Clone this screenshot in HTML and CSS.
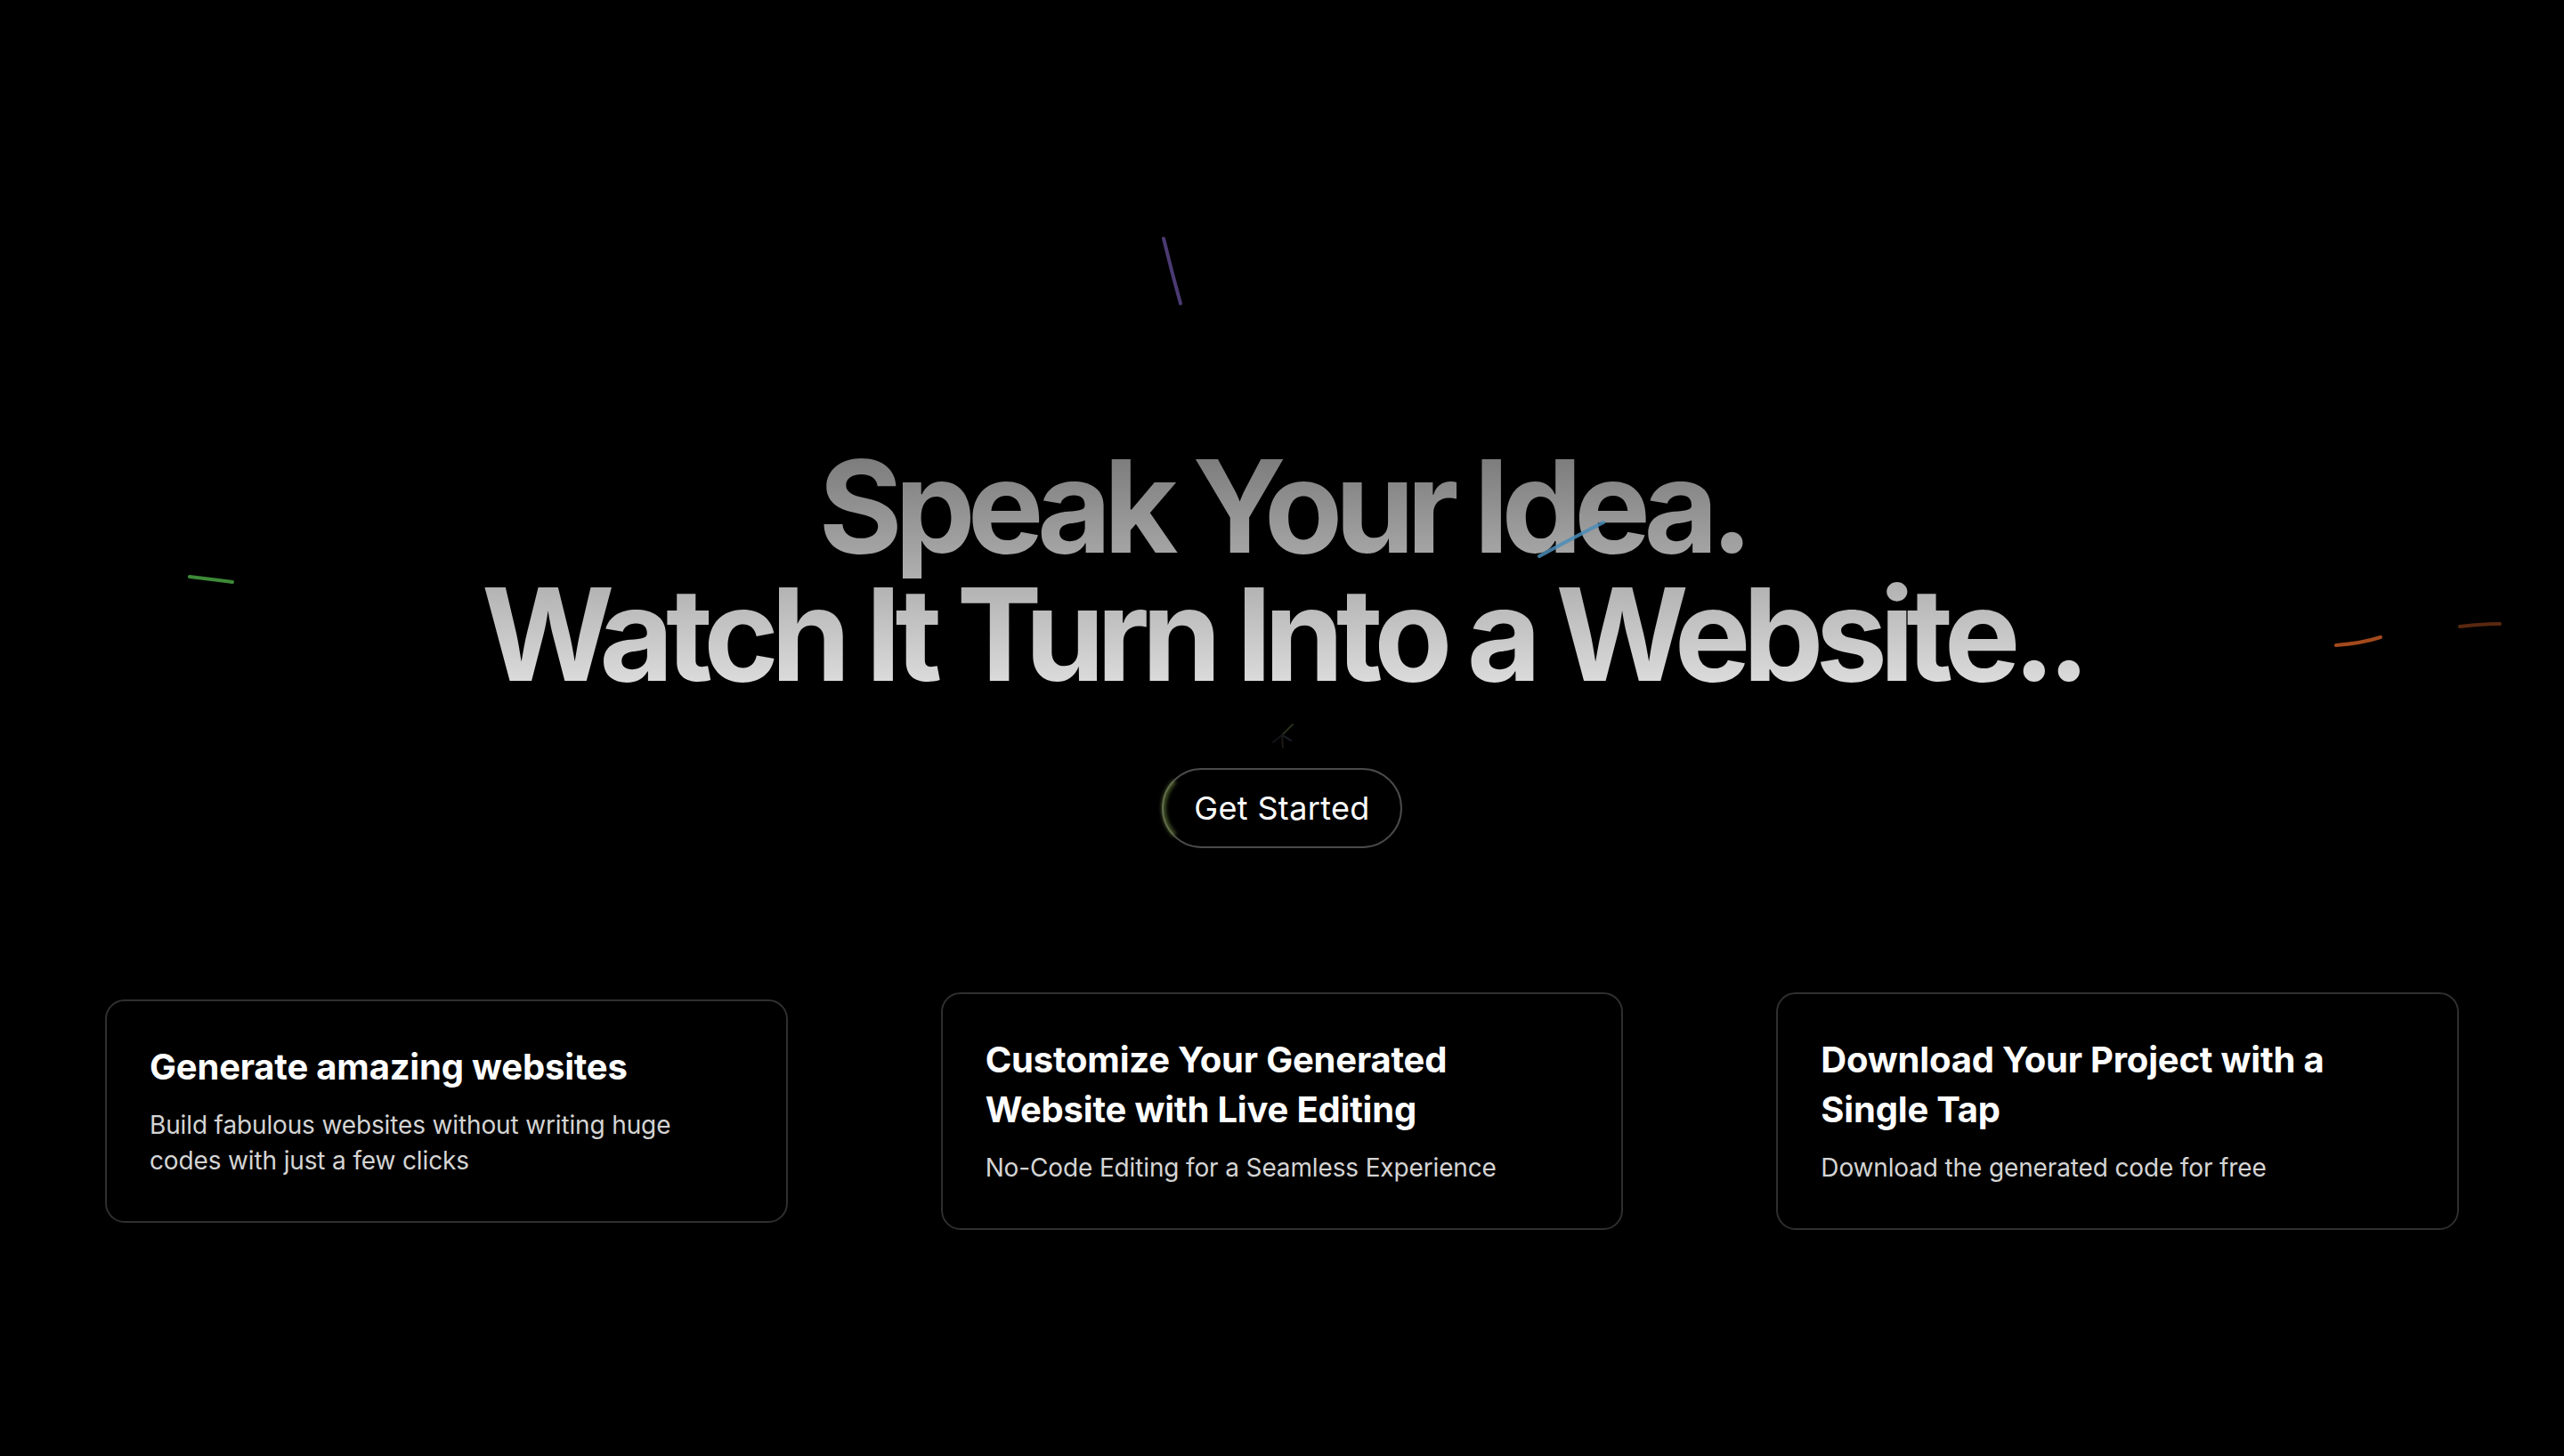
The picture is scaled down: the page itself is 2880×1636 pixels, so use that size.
FILE: index.html
```html
<!DOCTYPE html>
<html lang="en">
<head>
<meta charset="utf-8">
<title>Speak Your Idea</title>
<link rel="stylesheet" href="styles.css">
</head>
<body>
<div class="page">
  <svg class="streaks" width="2880" height="1636" viewBox="0 0 2880 1636" aria-hidden="true">
    <path d="M1307 268 Q1316 305 1326 341" stroke="#4b3a72" stroke-width="4" stroke-linecap="round" fill="none"/>
    <path d="M213 648 Q238 651 261 654" stroke="#3d8a38" stroke-width="4" stroke-linecap="round" fill="none"/>
    <path d="M2624 725 Q2652 723 2674 716" stroke="#a34a1c" stroke-width="4" stroke-linecap="round" fill="none"/>
    <path d="M2763 704 Q2786 701 2808 701" stroke="#5a2810" stroke-width="4" stroke-linecap="round" fill="none"/>
    <path d="M1729 625 Q1765 605 1801 587" stroke="#4a8cb8" stroke-opacity="0.85" stroke-width="4" stroke-linecap="round" fill="none"/>
    <g stroke-width="2" stroke-linecap="round" opacity="0.45">
      <path d="M1440 826 L1452 814" stroke="#556a40"/>
      <path d="M1440 826 L1450 832" stroke="#3e4a5a"/>
      <path d="M1440 826 L1441 840" stroke="#3b3b2a"/>
      <path d="M1440 826 L1430 834" stroke="#2e2e3a"/>
    </g>
  </svg>

  <main class="hero">
    <h1 class="headline">Speak Your Idea.<br>Watch It Turn Into a Website..</h1>
    <button class="cta" type="button">Get Started</button>

    <section class="features">
      <article class="card">
        <h2 class="card-title">Generate amazing websites</h2>
        <p class="card-text">Build fabulous websites without writing huge codes with just a few clicks</p>
      </article>
      <article class="card">
        <h2 class="card-title">Customize Your Generated Website with Live Editing</h2>
        <p class="card-text">No-Code Editing for a Seamless Experience</p>
      </article>
      <article class="card">
        <h2 class="card-title">Download Your Project with a Single Tap</h2>
        <p class="card-text">Download the generated code for free</p>
      </article>
    </section>
  </main>
</div>
</body>
</html>
```

FILE: styles.css
```css
* { box-sizing: border-box; }

html, body {
  margin: 0;
  padding: 0;
  background: #000;
}

body {
  font-family: Inter, "Noto Sans", "Liberation Sans", sans-serif;
  color: #fff;
}

.page {
  position: relative;
  min-height: 1636px;
  overflow: hidden;
}

.streaks {
  position: absolute;
  top: 0;
  left: 0;
  pointer-events: none;
  z-index: 2;
}

.hero {
  display: flex;
  flex-direction: column;
  align-items: center;
  padding-top: 497px;
}

.headline {
  margin: 0;
  font-size: 144px;
  line-height: 1;
  font-weight: 700;
  letter-spacing: -0.062em;
  text-align: center;
  background: linear-gradient(180deg, #767676 0%, #e2e2e2 100%);
  -webkit-background-clip: text;
  background-clip: text;
  color: transparent;
}

.cta {
  position: relative;
  margin-top: 78px;
  height: 90px;
  padding: 0 34px;
  border: 2px solid #4a4a4a;
  border-radius: 999px;
  background: #000;
  color: #fff;
  font-family: Inter, "Noto Sans", sans-serif;
  font-size: 36px;
  font-weight: 400;
  letter-spacing: 0.01em;
  cursor: pointer;
}

.cta::before {
  content: "";
  position: absolute;
  inset: -2px;
  border-radius: inherit;
  border: 4px solid transparent;
  border-left-color: rgba(140, 170, 80, 0.6);
  filter: blur(2px);
}

.features {
  display: grid;
  grid-template-columns: repeat(3, 1fr);
  column-gap: 172px;
  align-items: center;
  width: 100%;
  padding: 0 118px;
  margin-top: 162px;
}

.card {
  border: 2px solid #2f2f2f;
  border-radius: 22px;
  padding: 46px 96px 48px 48px;
  background: #000;
}

.card-title {
  margin: 0;
  font-size: 40px;
  line-height: 56px;
  font-weight: 700;
  letter-spacing: -0.005em;
  color: #fff;
}

.card-text {
  margin: 17px 0 0;
  font-size: 28px;
  line-height: 40px;
  font-weight: 400;
  letter-spacing: -0.005em;
  color: #d4d4d4;
}
```
